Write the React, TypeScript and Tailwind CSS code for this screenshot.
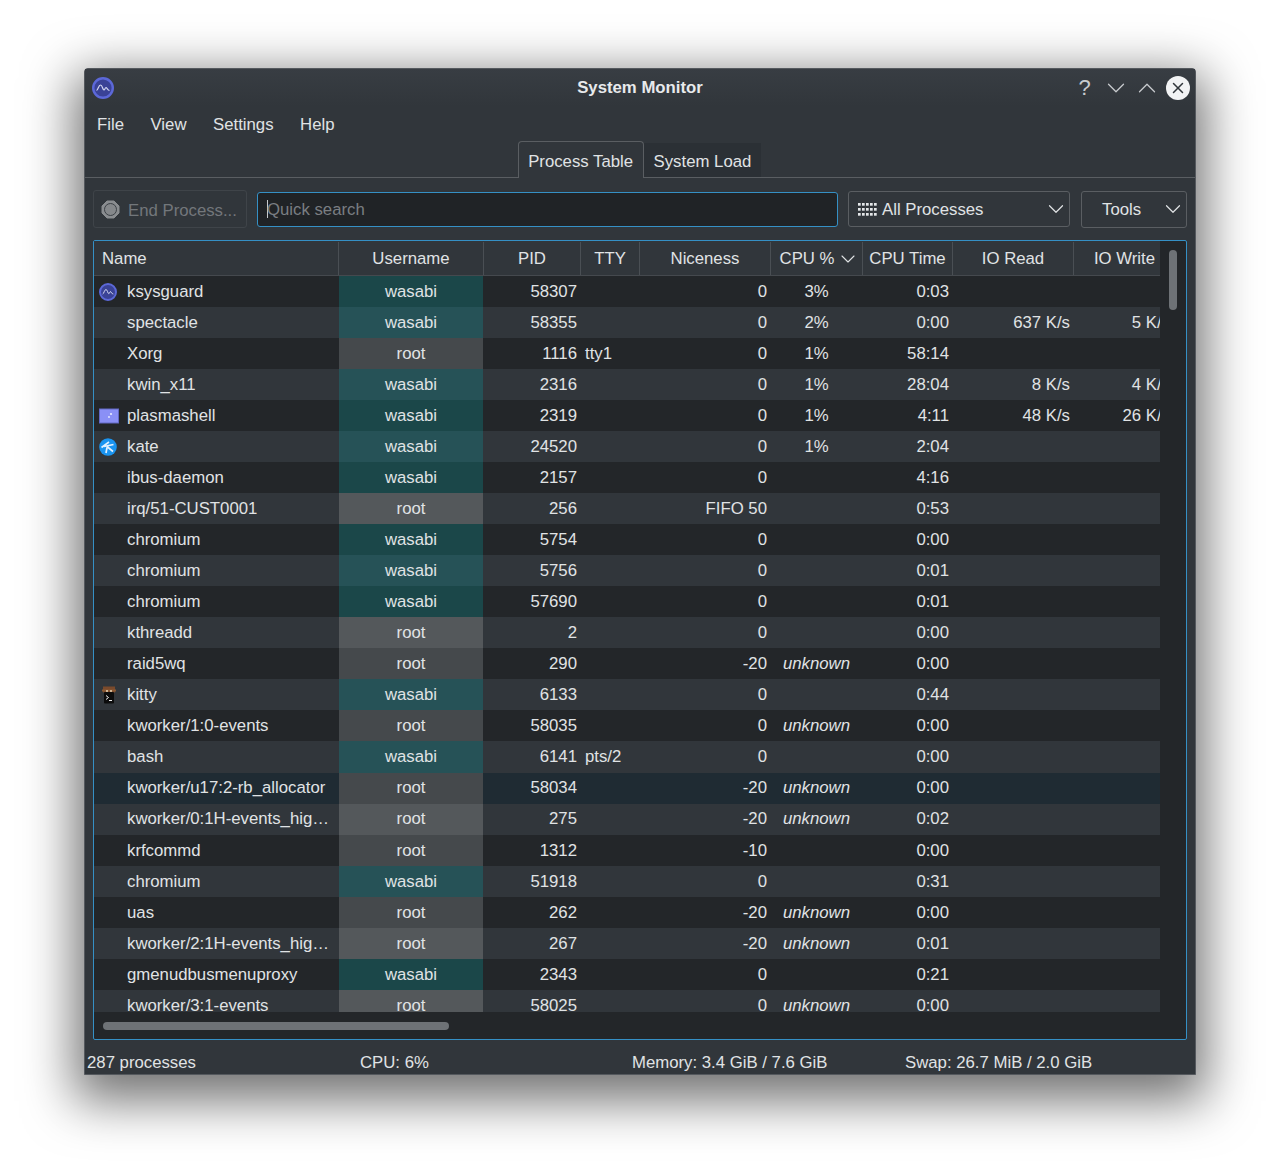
import { ChevronDown, ChevronUp, X } from 'lucide-react';

type Row = {
  name: string;
  user: string;
  pid: string;
  tty?: string;
  nice: string;
  cpu?: string;
  time: string;
  read?: string;
  write?: string;
  icon?: 'ksysguard' | 'plasma' | 'kate' | 'kitty';
  hover?: boolean;
};

const rows: Row[] = [
  { name: 'ksysguard', user: 'wasabi', pid: '58307', nice: '0', cpu: '3%', time: '0:03', icon: 'ksysguard' },
  { name: 'spectacle', user: 'wasabi', pid: '58355', nice: '0', cpu: '2%', time: '0:00', read: '637 K/s', write: '5 K/s' },
  { name: 'Xorg', user: 'root', pid: '1116', tty: 'tty1', nice: '0', cpu: '1%', time: '58:14' },
  { name: 'kwin_x11', user: 'wasabi', pid: '2316', nice: '0', cpu: '1%', time: '28:04', read: '8 K/s', write: '4 K/s' },
  { name: 'plasmashell', user: 'wasabi', pid: '2319', nice: '0', cpu: '1%', time: '4:11', read: '48 K/s', write: '26 K/s', icon: 'plasma' },
  { name: 'kate', user: 'wasabi', pid: '24520', nice: '0', cpu: '1%', time: '2:04', icon: 'kate' },
  { name: 'ibus-daemon', user: 'wasabi', pid: '2157', nice: '0', time: '4:16' },
  { name: 'irq/51-CUST0001', user: 'root', pid: '256', nice: 'FIFO 50', time: '0:53' },
  { name: 'chromium', user: 'wasabi', pid: '5754', nice: '0', time: '0:00' },
  { name: 'chromium', user: 'wasabi', pid: '5756', nice: '0', time: '0:01' },
  { name: 'chromium', user: 'wasabi', pid: '57690', nice: '0', time: '0:01' },
  { name: 'kthreadd', user: 'root', pid: '2', nice: '0', time: '0:00' },
  { name: 'raid5wq', user: 'root', pid: '290', nice: '-20', cpu: 'unknown', time: '0:00' },
  { name: 'kitty', user: 'wasabi', pid: '6133', nice: '0', time: '0:44', icon: 'kitty' },
  { name: 'kworker/1:0-events', user: 'root', pid: '58035', nice: '0', cpu: 'unknown', time: '0:00' },
  { name: 'bash', user: 'wasabi', pid: '6141', tty: 'pts/2', nice: '0', time: '0:00' },
  { name: 'kworker/u17:2-rb_allocator', user: 'root', pid: '58034', nice: '-20', cpu: 'unknown', time: '0:00', hover: true },
  { name: 'kworker/0:1H-events_hig…', user: 'root', pid: '275', nice: '-20', cpu: 'unknown', time: '0:02' },
  { name: 'krfcommd', user: 'root', pid: '1312', nice: '-10', time: '0:00' },
  { name: 'chromium', user: 'wasabi', pid: '51918', nice: '0', time: '0:31' },
  { name: 'uas', user: 'root', pid: '262', nice: '-20', cpu: 'unknown', time: '0:00' },
  { name: 'kworker/2:1H-events_hig…', user: 'root', pid: '267', nice: '-20', cpu: 'unknown', time: '0:01' },
  { name: 'gmenudbusmenuproxy', user: 'wasabi', pid: '2343', nice: '0', time: '0:21' },
  { name: 'kworker/3:1-events', user: 'root', pid: '58025', nice: '0', cpu: 'unknown', time: '0:00' },
];

function MonitorIcon({ size }: { size: number }) {
  return (
    <svg width={size} height={size} viewBox="0 0 22 22">
      <circle cx="11" cy="11" r="9.8" fill="#3a4296" stroke="#5c68d8" strokeWidth="2.4" />
      <path d="M4.5 13.5 C6 13.5 6.5 8 8.5 8 C10.5 8 10.5 13 12 13 C13 13 13 10.5 14 10.5 C15 10.5 15.5 13.5 17.5 13.5" fill="none" stroke="#d5d8f2" strokeWidth="1.2" />
    </svg>
  );
}

function RowIcon({ icon }: { icon: NonNullable<Row['icon']> }) {
  if (icon === 'ksysguard') return <MonitorIcon size={18} />;
  if (icon === 'plasma') {
    return (
      <svg width="20" height="16" viewBox="0 0 20 16">
        <rect x="0.5" y="1" width="19" height="14" fill="#8a90f6" stroke="#6268c4" />
        <circle cx="12" cy="6" r="1.1" fill="#e8ecff" />
        <circle cx="10" cy="9" r="0.9" fill="#e8ecff" />
      </svg>
    );
  }
  if (icon === 'kate') {
    return (
      <svg width="18" height="18" viewBox="0 0 18 18">
        <circle cx="9" cy="9" r="8.8" fill="#1a94f0" />
        <path d="M2.5 9.5 L10 4 M5 8.5 L14.5 6.5 M8 8.5 L14 13.5 M8 9.5 L7 15" stroke="#e2f1ff" strokeWidth="1.7" fill="none" />
      </svg>
    );
  }
  return (
    <svg className="ml-[3px]" width="14" height="18" viewBox="0 0 14 18">
      <rect x="1" y="0.5" width="12" height="6" fill="#7a4a2c" />
      <rect x="0" y="3.5" width="14" height="2" fill="#8b5a34" />
      <rect x="2" y="6" width="10" height="11.5" rx="1" fill="#0c0c0c" />
      <circle cx="5" cy="5" r="1" fill="#e8d8b8" />
      <circle cx="9" cy="5" r="1" fill="#e8d8b8" />
      <path d="M4 9.5 L6.5 11.5 L4 13.5 M7 14.5 H10" stroke="#eeeeee" strokeWidth="1" fill="none" />
    </svg>
  );
}

function HeaderCell({ className, children }: { className: string; children: React.ReactNode }) {
  return (
    <div className={`flex h-full shrink-0 items-center justify-center border-r border-[#4a4f54] ${className}`}>
      {children}
    </div>
  );
}

function ProcessRow({ row, odd }: { row: Row; odd: boolean }) {
  const base = row.hover ? 'bg-[#1f2b33]' : odd ? 'bg-[#31363b]' : 'bg-[#232629]';
  const userBg =
    row.user === 'wasabi'
      ? odd
        ? 'bg-[#265257]'
        : 'bg-[#1b4749]'
      : odd
        ? 'bg-[#54585b]'
        : 'bg-[#45494c]';
  return (
    <div className={`flex h-[31.04px] shrink-0 items-center ${base}`}>
      <div className="flex h-full w-[245px] shrink-0 items-center whitespace-nowrap pl-[5px]">
        <span className="flex w-[28px] shrink-0 items-center">{row.icon ? <RowIcon icon={row.icon} /> : null}</span>
        {row.name}
      </div>
      <div className={`flex h-full w-[144px] shrink-0 items-center justify-center ${userBg}`}>{row.user}</div>
      <div className="w-[96px] shrink-0 pr-[2px] text-right">{row.pid}</div>
      <div className="w-[59px] shrink-0 pl-[6px]">{row.tty}</div>
      <div className="w-[131px] shrink-0 pr-[2px] text-right">{row.nice}</div>
      <div className={`w-[92px] shrink-0 pl-[3px] text-center ${row.cpu === 'unknown' ? 'italic' : ''}`}>{row.cpu}</div>
      <div className="w-[90px] shrink-0 pr-[2px] text-right">{row.time}</div>
      <div className="w-[121px] shrink-0 pr-[2px] text-right">{row.read}</div>
      <div className="w-[101px] shrink-0 whitespace-nowrap pr-[3px] text-right">{row.write}</div>
    </div>
  );
}

export default function App() {
  return (
    <div className="h-[1174px] w-[1280px] overflow-hidden bg-white pl-[84px] pt-[68px] font-['Liberation_Sans',sans-serif] text-[16.75px] text-[#e0e3e5]">
      <div className="flex h-[1007px] w-[1112px] flex-col rounded-t-[4px] border border-[#55595e] bg-[#31363b] shadow-[0_16px_50px_10px_rgba(0,0,0,0.55)]">
        <div className="grid h-[37px] shrink-0 grid-cols-[1fr_auto_1fr] items-center bg-gradient-to-b from-[#383d43] to-[#31363b] pl-[7px] pr-[5px]">
          <MonitorIcon size={22} />
          <span className="mr-[2px] font-bold text-[#e8eaec]">System Monitor</span>
          <div className="flex items-center justify-end gap-[8px] text-[#c8cbce]">
            <span className="w-[23px] text-center text-[22px] font-light leading-none">?</span>
            <span className="flex w-[23px] justify-center">
              <ChevronDown className="shrink-0" size={30} strokeWidth={1} />
            </span>
            <span className="flex w-[23px] justify-center">
              <ChevronUp className="shrink-0" size={30} strokeWidth={1} />
            </span>
            <span className="flex h-[24px] w-[24px] items-center justify-center rounded-full bg-[#f2f3f4] text-[#31363b]">
              <X size={18} strokeWidth={2} />
            </span>
          </div>
        </div>

        <div className="flex h-[35px] shrink-0 items-center gap-[26.5px] pl-[12px] pt-[3px]">
          <span>File</span>
          <span>View</span>
          <span>Settings</span>
          <span>Help</span>
        </div>

        <div className="flex h-[37px] shrink-0 items-end justify-center border-b border-[#5a5e62] pr-[1px]">
          <div className="-mb-px flex h-[37px] items-center rounded-t-[4px] border border-b-0 border-[#5a5e62] bg-[#31363b] px-[9.5px] pt-[3px]">
            Process Table
          </div>
          <div className="flex h-[34px] items-center bg-[#2b3035] px-[10px] pt-[3px]">System Load</div>
        </div>

        <div className="mt-[12px] flex h-[38px] shrink-0 items-center gap-[10px] pl-[8px]">
          <div className="flex h-[38px] w-[154px] shrink-0 items-center gap-[8px] rounded-[3px] border border-[#3f4449] pl-[7px] text-[#73777b]">
            <svg width="19" height="19" viewBox="0 0 19 19">
              <path d="M6 1 H13 L18 6 V13 L13 18 H6 L1 13 V6 Z" fill="#8a8d90" stroke="#8a8d90" strokeLinejoin="round" />
              <circle cx="9.5" cy="9.5" r="6" fill="#85888b" stroke="#3c4146" strokeWidth="1" />
            </svg>
            <span className="pt-[3px]">End Process...</span>
          </div>
          <div className="flex h-[35px] w-[581px] shrink-0 items-center rounded-[3px] border border-[#3590c5] bg-[#202326] pl-[9px] text-[#7a7e82]">
            <span className="mr-[-1px] h-[18px] w-px bg-[#c8cbce]" />
            <span className="pt-[2px]">Quick search</span>
          </div>
          <div className="flex h-[36px] w-[222px] shrink-0 items-center justify-between rounded-[3px] border border-[#5a5e62] pl-[9px]">
            <span className="flex items-center gap-[5px]">
              <svg width="19" height="13" viewBox="0 0 19 13" fill="#e3e6e8">
                {[0, 5, 10].map((y) =>
                  [0, 4, 8, 12, 16].map((x) => <rect key={`${x}-${y}`} x={x} y={y} width="2.7" height="2.7" />),
                )}
              </svg>
              <span className="pt-[2px]">All Processes</span>
            </span>
            <ChevronDown size={26} strokeWidth={1.1} />
          </div>
          <div className="ml-[1px] flex h-[37px] w-[106px] shrink-0 items-center justify-between rounded-[3px] border border-[#5a5e62] pl-[20px]">
            <span className="pt-[1px]">Tools</span>
            <ChevronDown size={26} strokeWidth={1.1} />
          </div>
        </div>

        <div className="ml-[8px] mt-[12px] flex h-[800px] w-[1094px] shrink-0 flex-col overflow-hidden rounded-[2px] border border-[#3590c5] bg-[#232629]">
          <div className="flex min-h-0 flex-1">
            <div className="flex w-[1066px] shrink-0 flex-col overflow-hidden">
              <div className="flex h-[35px] shrink-0 items-center border-b border-[#45494e] bg-[#31363b] pt-[1px]">
                <div className="flex h-full w-[245px] shrink-0 items-center border-r border-[#4a4f54] pl-[8px]">Name</div>
                <HeaderCell className="w-[145px]">Username</HeaderCell>
                <HeaderCell className="w-[97px]">PID</HeaderCell>
                <HeaderCell className="w-[59px]">TTY</HeaderCell>
                <HeaderCell className="w-[131px]">Niceness</HeaderCell>
                <HeaderCell className="w-[92px] gap-[2px] pl-[7px]">
                  CPU %
                  <ChevronDown className="shrink-0" size={24} strokeWidth={1.1} />
                </HeaderCell>
                <HeaderCell className="w-[90px]">CPU Time</HeaderCell>
                <HeaderCell className="w-[121px]">IO Read</HeaderCell>
                <div className="flex h-full w-[86px] shrink-0 items-center justify-end pr-[5px]">IO Write</div>
              </div>
              <div className="flex min-h-0 flex-1 flex-col overflow-hidden">
                {rows.map((row, i) => (
                  <ProcessRow key={row.pid} row={row} odd={i % 2 === 1} />
                ))}
              </div>
            </div>
            <div className="flex-1 pl-[9px] pt-[9px]">
              <div className="h-[60px] w-[8px] rounded-full bg-[#6e7276]" />
            </div>
          </div>
          <div className="flex h-[27px] shrink-0 items-center pl-[9px]">
            <div className="h-[8px] w-[346px] rounded-full bg-[#6e7276]" />
          </div>
        </div>

        <div className="flex flex-1 items-center pl-[2px] pt-[10px]">
          <span className="w-[273px] shrink-0">287 processes</span>
          <span className="w-[272px] shrink-0">CPU: 6%</span>
          <span className="w-[273px] shrink-0">Memory: 3.4 GiB / 7.6 GiB</span>
          <span>Swap: 26.7 MiB / 2.0 GiB</span>
        </div>
      </div>
    </div>
  );
}
